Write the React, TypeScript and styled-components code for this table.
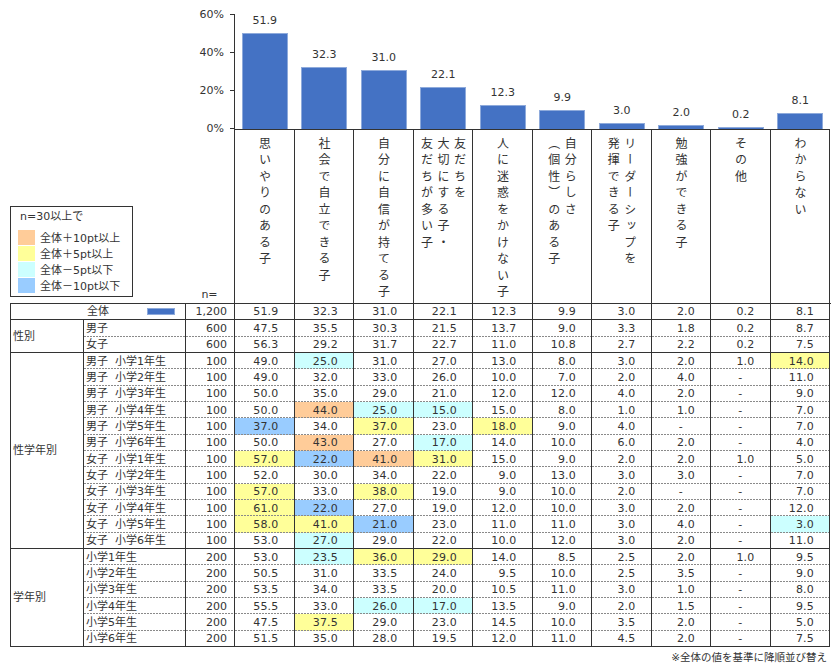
import React from "react";
import styled, { createGlobalStyle } from "styled-components";

const GlobalStyle = createGlobalStyle`
  html, body { margin: 0; padding: 0; background: #fff; }
  body {
    font-family: "DejaVu Sans", "Noto Sans CJK JP", sans-serif;
    color: #333;
  }
`;

const HL: Record<string, string> = {
  o: "#FFCC99",
  y: "#FFFF99",
  c: "#CCFFFF",
  b: "#99CCFF",
};

const categories: string[][] = [
  ["思いやりのある子"],
  ["社会で自立できる子"],
  ["自分に自信が持てる子"],
  ["友だちを", "大切にする子・", "友だちが多い子"],
  ["人に迷惑をかけない子"],
  ["自分らしさ", "（個性）のある子"],
  ["リーダーシップを", "発揮できる子"],
  ["勉強ができる子"],
  ["その他"],
  ["わからない"],
];

const totals = [51.9, 32.3, 31.0, 22.1, 12.3, 9.9, 3.0, 2.0, 0.2, 8.1];

type Row = { label: string; n: string; vals: string[] };
type Group = { name: string; rows: Row[] };

const r = (label: string, n: string, s: string): Row => ({
  label,
  n,
  vals: s.split(" "),
});

const groups: Group[] = [
  {
    name: "性別",
    rows: [
      r("男子", "600", "47.5 35.5 30.3 21.5 13.7 9.0 3.3 1.8 0.2 8.7"),
      r("女子", "600", "56.3 29.2 31.7 22.7 11.0 10.8 2.7 2.2 0.2 7.5"),
    ],
  },
  {
    name: "性学年別",
    rows: [
      r("男子  小学1年生", "100", "49.0 25.0c 31.0 27.0 13.0 8.0 3.0 2.0 1.0 14.0y"),
      r("男子  小学2年生", "100", "49.0 32.0 33.0 26.0 10.0 7.0 2.0 4.0 - 11.0"),
      r("男子  小学3年生", "100", "50.0 35.0 29.0 21.0 12.0 12.0 4.0 2.0 - 9.0"),
      r("男子  小学4年生", "100", "50.0 44.0o 25.0c 15.0c 15.0 8.0 1.0 1.0 - 7.0"),
      r("男子  小学5年生", "100", "37.0b 34.0 37.0y 23.0 18.0y 9.0 4.0 - - 7.0"),
      r("男子  小学6年生", "100", "50.0 43.0o 27.0 17.0c 14.0 10.0 6.0 2.0 - 4.0"),
      r("女子  小学1年生", "100", "57.0y 22.0b 41.0o 31.0y 15.0 9.0 2.0 2.0 1.0 5.0"),
      r("女子  小学2年生", "100", "52.0 30.0 34.0 22.0 9.0 13.0 3.0 3.0 - 7.0"),
      r("女子  小学3年生", "100", "57.0y 33.0 38.0y 19.0 9.0 10.0 2.0 - - 7.0"),
      r("女子  小学4年生", "100", "61.0y 22.0b 27.0 19.0 12.0 10.0 3.0 2.0 - 12.0"),
      r("女子  小学5年生", "100", "58.0y 41.0y 21.0b 23.0 11.0 11.0 3.0 4.0 - 3.0c"),
      r("女子  小学6年生", "100", "53.0 27.0c 29.0 22.0 10.0 12.0 3.0 2.0 - 11.0"),
    ],
  },
  {
    name: "学年別",
    rows: [
      r("小学1年生", "200", "53.0 23.5c 36.0y 29.0y 14.0 8.5 2.5 2.0 1.0 9.5"),
      r("小学2年生", "200", "50.5 31.0 33.5 24.0 9.5 10.0 2.5 3.5 - 9.0"),
      r("小学3年生", "200", "53.5 34.0 33.5 20.0 10.5 11.0 3.0 1.0 - 8.0"),
      r("小学4年生", "200", "55.5 33.0 26.0c 17.0c 13.5 9.0 2.0 1.5 - 9.5"),
      r("小学5年生", "200", "47.5 37.5y 29.0 23.0 14.5 10.0 3.5 2.0 - 5.0"),
      r("小学6年生", "200", "51.5 35.0 28.0 19.5 12.0 11.0 4.5 2.0 - 7.5"),
    ],
  },
];

const legendItems = [
  { c: HL.o, t: "全体＋10pt以上" },
  { c: HL.y, t: "全体＋5pt以上" },
  { c: HL.c, t: "全体－5pt以下" },
  { c: HL.b, t: "全体－10pt以下" },
];

const PLOT_H = 115;
const MAX = 60;

/* ---------- layout ---------- */

const Page = styled.div`
  width: 837px;
  height: 668px;
  overflow: hidden;
`;

const TopArea = styled.div`
  display: grid;
  grid-template-columns: 234px 596px;
  grid-template-rows: 130px 173px;
`;

const YAxis = styled.div`
  align-self: start;
  margin-top: 7.5px;
  height: 128px;
  display: flex;
  flex-direction: column;
  justify-content: space-between;
  align-items: flex-end;
`;

const AxisLabel = styled.div`
  display: flex;
  align-items: center;
  height: 13px;
  font-size: 11px;
  line-height: 13px;
  color: #333;
`;

const Tick = styled.span`
  width: 4px;
  height: 1px;
  margin-left: 6px;
  background: #333;
`;

const Plot = styled.div`
  margin-top: 14px;
  height: ${PLOT_H}px;
  border-left: 1px solid #333;
  border-bottom: 1px solid #333;
  display: flex;
  align-items: flex-end;
`;

const BarSlot = styled.div`
  flex: none;
  width: 59.5px;
  height: 100%;
  display: flex;
  flex-direction: column;
  align-items: center;
  justify-content: flex-end;
`;

const ValueLabel = styled.div`
  font-size: 11px;
  line-height: 13px;
  margin-bottom: 6px;
  color: #333;
`;

const Bar = styled.div`
  box-sizing: border-box;
  width: 46px;
  background: #4472c4;
  border: 1px solid #8eaadb;
  border-bottom: none;
`;

const LeftBottom = styled.div`
  display: flex;
  align-items: flex-end;
  justify-content: space-between;
  padding-left: 10px;
`;

const Legend = styled.div`
  box-sizing: border-box;
  width: 123px;
  border: 1px solid #333;
  padding: 2px 6px 3px 7px;
  margin-bottom: 6px;
  font-size: 11px;
  color: #333;
`;

const LegendTitle = styled.div`
  line-height: 16px;
  margin-bottom: 4px;
  padding-left: 2px;
`;

const LegendItem = styled.div`
  display: flex;
  align-items: center;
  gap: 5px;
  height: 16px;
  white-space: nowrap;
`;

const Swatch = styled.span<{ $c: string }>`
  flex: none;
  width: 17px;
  height: 15px;
  background: ${(p) => p.$c};
`;

const NLabel = styled.div`
  width: 49px;
  text-align: center;
  font-size: 11px;
  line-height: 14px;
  margin-bottom: 1px;
`;

const LabelRow = styled.div`
  display: flex;
  border-left: 1px solid #333;
`;

const LabelCell = styled.div`
  flex: none;
  box-sizing: border-box;
  width: 59.5px;
  border-right: 1px solid #333;
  display: flex;
  justify-content: center;
  padding-top: 7px;
`;

const VText = styled.div`
  writing-mode: vertical-rl;
  font-family: "Noto Sans CJK JP", sans-serif;
  font-size: 12px;
  line-height: 16.5px;
  letter-spacing: 4.5px;
  white-space: nowrap;
  color: #333;
`;

/* ---------- table ---------- */

const Table = styled.div`
  margin-left: 10px;
  width: 820px;
  display: grid;
  grid-template-columns: 73px 102px 49px repeat(10, 59.5px);
  grid-auto-rows: 16.33px;
  border-left: 1px solid #333;
  border-top: 1px solid #333;
  font-size: 11px;
`;

const dashLine = `linear-gradient(to right, #8a8a8a 2px, transparent 2px) left bottom / 3px 1px repeat-x`;

const BaseCell = styled.div<{ $dashed?: boolean; $bg?: string }>`
  box-sizing: border-box;
  border-right: 1px solid #333;
  border-bottom: ${(p) => (p.$dashed ? "none" : "1px solid #333")};
  background: ${(p) =>
    p.$dashed
      ? `${dashLine}, ${p.$bg ?? "#fff"}`
      : p.$bg ?? "#fff"};
  display: flex;
  align-items: center;
  white-space: pre;
  overflow: hidden;
  line-height: 1;
  color: #333;
`;

const GroupCell = styled(BaseCell)<{ $span: number }>`
  grid-column: 1;
  grid-row: span ${(p) => p.$span};
  padding-left: 2px;
`;

const TotalCell = styled(BaseCell)`
  grid-column: span 2;
  display: grid;
  grid-template-columns: 1fr auto 1fr;
  align-items: center;
`;

const TotalText = styled.span`
  grid-column: 2;
`;

const TotalMarker = styled.span`
  grid-column: 3;
  justify-self: end;
  width: 28px;
  height: 7px;
  margin-right: 10px;
  background: #4472c4;
  border: 1px solid #8eaadb;
  box-sizing: border-box;
`;

const RowLabel = styled(BaseCell)`
  padding-left: 2px;
`;

const NCell = styled(BaseCell)`
  justify-content: flex-end;
  padding-right: 7px;
`;

const ValueCell = styled(BaseCell)<{ $dash?: boolean }>`
  justify-content: ${(p) => (p.$dash ? "center" : "flex-end")};
  padding-right: ${(p) => (p.$dash ? "0" : "15px")};
  letter-spacing: 0.2px;
`;

const Footnote = styled.div`
  width: 830px;
  text-align: right;
  padding-right: 3px;
  box-sizing: border-box;
  margin-top: 3px;
  font-size: 10.5px;
  line-height: 14px;
  color: #333;
`;

function renderValues(vals: string[], dashed: boolean, keyBase: string) {
  return vals.map((v, i) => {
    const last = v.slice(-1);
    const hasHl = /[oycb]/.test(last);
    const text = hasHl ? v.slice(0, -1) : v;
    return (
      <ValueCell
        key={`${keyBase}-${i}`}
        $dashed={dashed}
        $bg={hasHl ? HL[last] : undefined}
        $dash={text === "-"}
      >
        {text}
      </ValueCell>
    );
  });
}

export default function App() {
  return (
    <Page>
      <GlobalStyle />
      <TopArea>
        <YAxis>
          {["60%", "40%", "20%", "0%"].map((t) => (
            <AxisLabel key={t}>
              {t}
              <Tick />
            </AxisLabel>
          ))}
        </YAxis>
        <Plot>
          {totals.map((v, i) => (
            <BarSlot key={i}>
              <ValueLabel>{v.toFixed(1)}</ValueLabel>
              <Bar style={{ height: Math.max(2, (v * PLOT_H) / MAX) }} />
            </BarSlot>
          ))}
        </Plot>
        <LeftBottom>
          <Legend>
            <LegendTitle>n=30以上で</LegendTitle>
            {legendItems.map((it) => (
              <LegendItem key={it.t}>
                <Swatch $c={it.c} />
                {it.t}
              </LegendItem>
            ))}
          </Legend>
          <NLabel>n=</NLabel>
        </LeftBottom>
        <LabelRow>
          {categories.map((lines, i) => (
            <LabelCell key={i}>
              <VText>
                {lines.map((l, j) => (
                  <React.Fragment key={j}>
                    {j > 0 && <br />}
                    {l}
                  </React.Fragment>
                ))}
              </VText>
            </LabelCell>
          ))}
        </LabelRow>
      </TopArea>
      <Table>
        <TotalCell>
          <TotalText>全体</TotalText>
          <TotalMarker />
        </TotalCell>
        <NCell>1,200</NCell>
        {renderValues(totals.map((v) => v.toFixed(1)), false, "total")}
        {groups.map((g) => (
          <React.Fragment key={g.name}>
            <GroupCell $span={g.rows.length}>{g.name}</GroupCell>
            {g.rows.map((row, ri) => {
              const dashed = ri < g.rows.length - 1;
              return (
                <React.Fragment key={row.label}>
                  <RowLabel $dashed={dashed}>{row.label}</RowLabel>
                  <NCell $dashed={dashed}>{row.n}</NCell>
                  {renderValues(row.vals, dashed, `${g.name}-${ri}`)}
                </React.Fragment>
              );
            })}
          </React.Fragment>
        ))}
      </Table>
      <Footnote>※全体の値を基準に降順並び替え</Footnote>
    </Page>
  );
}
